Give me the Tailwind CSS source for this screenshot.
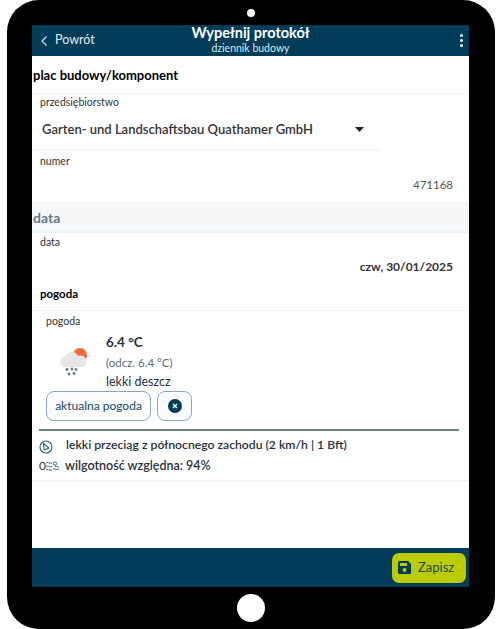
<!DOCTYPE html>
<html lang="pl">
<head>
    <meta charset="UTF-8">
    <meta name="viewport" content="width=device-width, initial-scale=1.0">
    <title>Wypełnij protokół</title>
    <script src="https://cdn.jsdelivr.net/npm/@tailwindcss/browser@4"></script>
</head>
<body class="bg-white h-[629px] w-[500px] overflow-hidden font-['Lato',sans-serif]">

    <div class="ml-[7px] w-[488px] h-[629px] bg-black rounded-[32px] flex flex-col">
        <!-- top bezel -->
        <div class="h-[25px] flex items-center justify-center">
            <div class="w-[8px] h-[8px] rounded-full bg-white"></div>
        </div>

        <div class="ml-[25px] w-[437px] h-[562px] bg-white flex flex-col">
            <!-- header -->
            <header class="h-[31px] bg-[#013c58] grid grid-cols-[1fr_auto_1fr] items-center text-white shrink-0">
                <div class="flex items-center pl-[8px] gap-[6px]">
                    <svg width="9" height="12" viewBox="0 0 9 12" fill="none" stroke="#e6edf1" stroke-width="1.1"><path d="M6.500 1.500 2 6l4.500 4.500"/></svg>
                    <span class="text-[12.5px] text-[#e6edf1]">Powrót</span>
                </div>
                <div class="flex flex-col items-center -mt-[1px]">
                    <div class="text-[14.500px] leading-[16px] font-bold">Wypełnij protokół</div>
                    <div class="text-[10.5px] leading-[14px] text-[#dfe8ec]">dziennik budowy</div>
                </div>
                <div class="justify-self-end w-[16px] flex flex-col items-center gap-[2px]">
                    <span class="w-[3px] h-[3px] rounded-full bg-white"></span>
                    <span class="w-[3px] h-[3px] rounded-full bg-white"></span>
                    <span class="w-[3px] h-[3px] rounded-full bg-white"></span>
                </div>
            </header>

            <!-- plac budowy -->
            <div class="h-[38px] border-b border-[#eef0f2] flex items-center pl-[1px] pt-[2px] font-bold text-[13px] text-black">plac budowy/komponent</div>

            <div class="h-[56px] w-[349px] border-b border-[#eef0f2]">
                <div class="pl-[8px] pt-[1px] text-[10.5px] leading-[15px] text-[#333]">przedsiębiorstwo</div>
                <div class="flex items-center justify-between pl-[10px] pr-[17px] mt-[10px]">
                    <span class="text-[13px] leading-[18px] font-semibold text-[#333]">Garten- und Landschaftsbau Quathamer GmbH</span>
                    <svg width="9" height="5" viewBox="0 0 9 5" fill="#1b2630"><path d="M0 0h9L4.500 5z"/></svg>
                </div>
            </div>

            <div class="h-[53px] border-b border-[#eef0f2]">
                <div class="pl-[8px] pt-[4px] text-[10.5px] leading-[15px] text-[#333]">numer</div>
                <div class="text-right pr-[16px] mt-[8px] text-[11.5px] leading-[16px] text-[#555]">471168</div>
            </div>

            <div class="h-[30px] bg-[#f5f7f9] border-b-2 border-[#eff2f4] flex items-center pl-[1px] text-[14px] font-bold text-[#64798a]">data</div>

            <div class="h-[47px]">
                <div class="pl-[8px] pt-[2px] text-[10.5px] leading-[15px] text-[#333]">data</div>
                <div class="text-right pr-[16px] mt-[9px] text-[12px] leading-[16px] font-bold text-[#333]">czw, 30/01/2025</div>
            </div>

            <div class="h-[31px] pl-[8px] pt-[6px] text-[11.5px] leading-[15px] font-bold text-black border-b border-[#eef0f2]">pogoda</div>

            <!-- weather -->
            <div class="pl-[14px] pt-[3px] h-[118px]">
                <div class="text-[10.5px] leading-[15px] text-[#333]">pogoda</div>
                <div class="flex">
                    <div class="w-[60px] pt-[17px] pl-[13px]">
                        <svg width="32" height="30" viewBox="0 0 32 30">
                            <circle cx="21" cy="9" r="7" fill="#ee6f3c"/>
                            <path d="M7 21a5 5 0 0 1-1-10 7 7 0 0 1 13-1 5.500 5.500 0 0 1 5 11z" fill="#e4e6e8"/>
                            <g fill="#6b7680">
                                <circle cx="8" cy="23.500" r="1.400"/><circle cx="13" cy="23" r="1.400"/><circle cx="17" cy="23.500" r="1.400"/>
                                <circle cx="10" cy="28" r="1.400"/><circle cx="15" cy="27.500" r="1.400"/>
                            </g>
                        </svg>
                    </div>
                    <div class="mt-[4px]">
                        <div class="text-[13.5px] leading-[19px] font-bold text-[#26323a]">6.4 °C</div>
                        <div class="text-[11.5px] leading-[21px] text-[#5a6b78]">(odcz. 6.4 °C)</div>
                        <div class="text-[12.500px] leading-[17px] text-[#26323a]">lekki deszcz</div>
                    </div>
                </div>
                <div class="flex gap-[6px] mt-[1px]">
                    <button class="h-[30px] w-[105px] rounded-[8px] border border-[#8aa7b8] bg-[#f9fbfc] text-[12px] text-[#174a66]">aktualna pogoda</button>
                    <button class="h-[30px] w-[35px] rounded-[8px] border border-[#8aa7b8] bg-[#f9fbfc] flex items-center justify-center">
                        <svg width="14" height="14" viewBox="0 0 14 14"><circle cx="7" cy="7" r="7" fill="#013c58"/><path d="M5 5l4 4M9 5l-4 4" stroke="#fff" stroke-width="1.400"/></svg>
                    </button>
                </div>
            </div>

            <!-- wind and humidity -->
            <div class="mx-[7px] w-[420px] border-t-2 border-[#6c8291]"></div>
            <div class="h-[50px] border-b border-[#eef0f2] text-[12.2px] font-semibold text-[#26323a]">
                <div class="flex items-center h-[28px] pl-[7px]">
                    <svg width="14" height="14" viewBox="0 0 14 14" fill="none" stroke="#2f5f7c" stroke-width="1.100" class="mt-[3px]"><circle cx="7" cy="7" r="6"/><path d="M4.500 3.500 10 8l-5 2z"/></svg>
                    <span class="ml-[13px]">lekki przeciąg z północnego zachodu (2 km/h | 1 Bft)</span>
                </div>
                <div class="flex items-center h-[14px] pl-[7px]">
                    <span class="w-[7px] text-[12px] font-normal">0</span>
                    <svg width="13" height="11" viewBox="0 0 13 11" fill="none" stroke="#2f5f7c" stroke-width="0.900"><path d="M0 2c2-1.500 3 1 6 0M0 5.500c2-1.500 3 1 6 0M0 9c2-1.500 3 1 6 0"/><circle cx="9" cy="2.500" r="1.700"/><path d="M7 7.500c2 1 4 1.500 6 0M9 5c1.500 1 2.500 1 4 0"/></svg>
                    <span class="ml-[6px] text-[12.500px]">wilgotność względna: 94%</span>
                </div>
            </div>

            <div class="flex-1"></div>

            <!-- footer -->
            <footer class="h-[39px] shrink-0 bg-[#013c58] flex items-center justify-end pr-[3px]">
                <button class="w-[74px] h-[30px] rounded-[7px] bg-[#bccb00] flex items-center pl-[6px] gap-[7px] text-[13px] text-[#1f4a4a]">
                    <svg width="13" height="13" viewBox="0 0 13 13"><path d="M1.500 0H10l3 3v8.500a1.500 1.500 0 0 1-1.500 1.500h-10A1.500 1.500 0 0 1 0 11.500v-10A1.500 1.500 0 0 1 1.500 0z" fill="#013c58"/><rect x="2" y="2" width="7" height="3" fill="#bccb00"/><circle cx="6.500" cy="9" r="2" fill="#bccb00"/></svg>
                    Zapisz
                </button>
            </footer>
        </div>

        <!-- home button -->
        <div class="flex-1 flex items-center justify-center">
            <div class="w-[28px] h-[28px] rounded-full bg-white"></div>
        </div>
    </div>

</body>
</html>
